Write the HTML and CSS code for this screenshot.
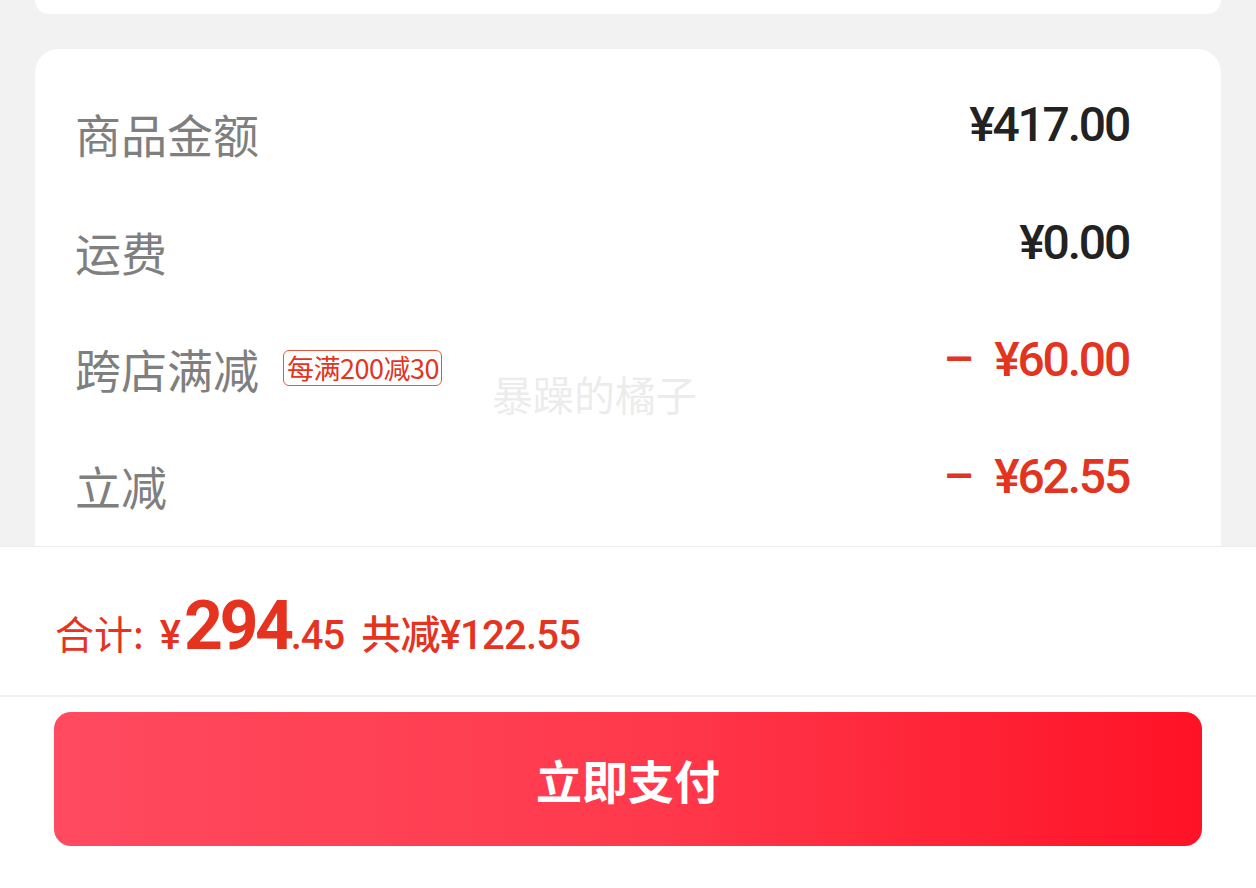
FILE: index.html
```html
<!DOCTYPE html>
<html lang="zh-CN">
<head>
<meta charset="utf-8">
<title>订单结算</title>
<link rel="stylesheet" href="styles.css">
</head>
<body>
<div class="page">
  <main class="content">
    <div class="card-top"></div>
    <section class="card summary">
      <div class="row">
        <span class="label">商品金额</span>
        <span class="amount">¥417.00</span>
      </div>
      <div class="row">
        <span class="label">运费</span>
        <span class="amount">¥0.00</span>
      </div>
      <div class="row">
        <span class="label">跨店满减<span class="badge">每满200减30</span></span>
        <span class="amount red"><span class="minus">–</span>¥60.00</span>
      </div>
      <div class="row">
        <span class="label">立减</span>
        <span class="amount red"><span class="minus">–</span>¥62.55</span>
      </div>
    </section>
    <div class="watermark">暴躁的橘子</div>
  </main>
  <footer class="footer">
    <div class="total">
      <span class="t-label">合计:</span>
      <span class="t-yen">¥</span><span class="t-int">294</span><span class="t-dec">.45</span>
      <span class="t-save">共减¥122.55</span>
    </div>
    <div class="pay-wrap">
      <button class="pay">立即支付</button>
    </div>
  </footer>
</div>
</body>
</html>
```
FILE: styles.css
```css
html, body {
  margin: 0;
  padding: 0;
}
body {
  background: #f2f2f2;
  font-family: "Noto Sans CJK SC", "Noto Sans", sans-serif;
}
.page {
  width: 1256px;
  height: 888px;
  display: flex;
  flex-direction: column;
  overflow: hidden;
}
.content {
  position: relative;
  height: 546px;
  flex: none;
  overflow: hidden;
}
.card-top {
  margin: 0 35px;
  height: 14px;
  background: #fff;
  border-radius: 0 0 24px 24px;
}
.card {
  background: #fff;
  border-radius: 24px;
}
.summary {
  margin: 35px 35px 0;
  padding: 26px 92px 60px 40px;
}
.row {
  height: 117.3px;
  display: flex;
  align-items: center;
  justify-content: space-between;
}
.label {
  display: flex;
  align-items: center;
  font-size: 46px;
  line-height: 1.1;
  color: #7f7f7f;
}
.badge {
  margin-left: 24px;
  height: 34px;
  padding: 0 2px 0 3px;
  border: 1px solid #e6573f;
  border-radius: 6px;
  font-size: 27px;
  line-height: 34px;
  letter-spacing: -0.5px;
  color: #e2341f;
}
.amount {
  font-family: Roboto, "Noto Sans", sans-serif;
  font-weight: 500;
  font-size: 48px;
  letter-spacing: -2.2px;
  line-height: 1.1;
  color: #222;
  margin-bottom: 16px;
}
.amount.red {
  color: #e2341f;
}
.minus {
  font-weight: 500;
  letter-spacing: 0;
  margin-right: 20px;
}
.watermark {
  position: absolute;
  left: 492px;
  top: 371px;
  font-size: 41px;
  line-height: 1.1;
  color: rgba(200, 200, 200, 0.35);
}
.footer {
  flex: 1;
  background: #fff;
  border-top: 1px solid #ececec;
  display: flex;
  flex-direction: column;
}
.total {
  height: 150px;
  border-bottom: 2px solid #f2f2f2;
  display: flex;
  align-items: baseline;
  padding: 40px 0 0 55px;
  box-sizing: border-box;
  color: #e5331f;
  white-space: nowrap;
  line-height: 1.15;
}
.t-label {
  font-size: 39px;
  margin-right: 16px;
}
.t-yen {
  font-family: Roboto, sans-serif;
  font-weight: 500;
  font-size: 40px;
  margin-right: 3px;
}
.t-int {
  font-family: Roboto, sans-serif;
  font-weight: 700;
  font-size: 68px;
  letter-spacing: -3.5px;
}
.t-dec {
  font-family: Roboto, sans-serif;
  font-weight: 500;
  font-size: 40px;
  letter-spacing: -1px;
}
.t-save {
  margin-left: 17px;
  font-size: 40px;
  font-weight: 500;
  font-family: Roboto, "Noto Sans CJK SC", sans-serif;
  letter-spacing: -0.8px;
}
.pay-wrap {
  padding: 15px 54px 0;
}
.pay {
  display: block;
  width: 100%;
  height: 134px;
  border: none;
  border-radius: 17px;
  background: linear-gradient(90deg, #ff4a5f 0%, #ff3a4d 50%, #ff1226 100%);
  color: #fff;
  font-family: "Noto Sans CJK SC", sans-serif;
  font-weight: 700;
  font-size: 46px;
  cursor: pointer;
}
```
